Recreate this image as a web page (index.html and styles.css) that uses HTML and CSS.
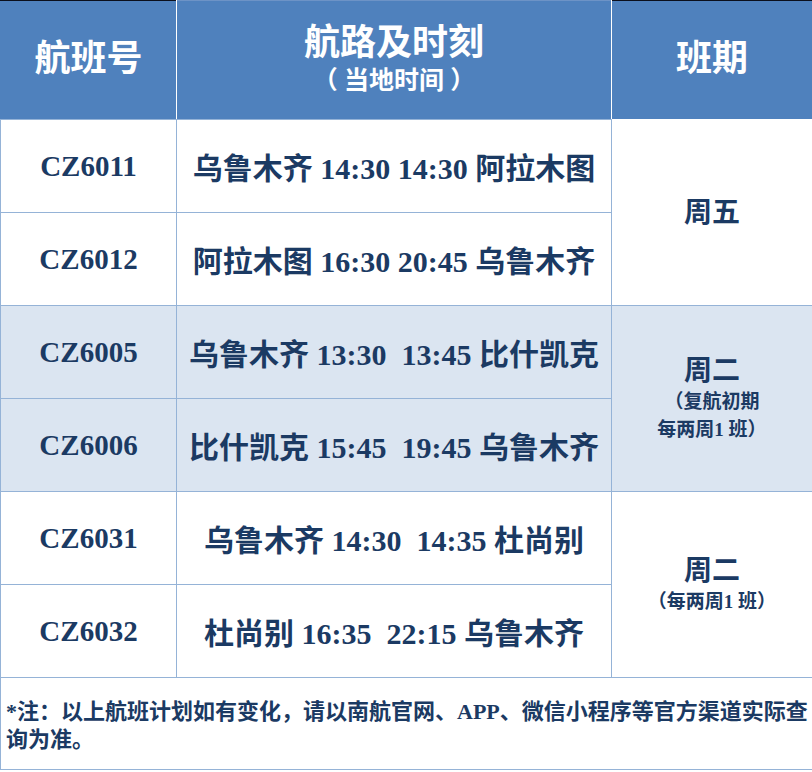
FILE: index.html
```html
<!DOCTYPE html>
<html lang="zh-CN">
<head>
<meta charset="utf-8">
<title>航班计划</title>
<link rel="stylesheet" href="styles.css">
</head>
<body>
<table class="schedule">
  <colgroup>
    <col class="c1">
    <col class="c2">
    <col class="c3">
  </colgroup>
  <thead>
    <tr class="head">
      <th class="h1">航班号</th>
      <th class="h2"><div class="h-main">航路及时刻</div><div class="h-sub">（ 当地时间 ）</div></th>
      <th class="h3">班期</th>
    </tr>
  </thead>
  <tbody>
    <tr>
      <td class="code">CZ6011</td>
      <td class="route">乌鲁木齐 14:30 14:30 阿拉木图</td>
      <td class="days" rowspan="2"><div class="day-main">周五</div></td>
    </tr>
    <tr>
      <td class="code">CZ6012</td>
      <td class="route">阿拉木图 16:30 20:45 乌鲁木齐</td>
    </tr>
    <tr class="shade">
      <td class="code">CZ6005</td>
      <td class="route">乌鲁木齐 13:30&nbsp; 13:45 比什凯克</td>
      <td class="days" rowspan="2"><div class="day-main">周二</div><div class="day-sub">（复航初期</div><div class="day-sub">每两周1 班）</div></td>
    </tr>
    <tr class="shade">
      <td class="code">CZ6006</td>
      <td class="route">比什凯克 15:45&nbsp; 19:45 乌鲁木齐</td>
    </tr>
    <tr>
      <td class="code">CZ6031</td>
      <td class="route">乌鲁木齐 14:30&nbsp; 14:35 杜尚别</td>
      <td class="days" rowspan="2"><div class="day-main">周二</div><div class="day-sub">（每两周1 班）</div></td>
    </tr>
    <tr>
      <td class="code">CZ6032</td>
      <td class="route">杜尚别 16:35&nbsp; 22:15 乌鲁木齐</td>
    </tr>
    <tr>
      <td class="note" colspan="3">*注：以上航班计划如有变化，请以南航官网、APP、微信小程序等官方渠道实际查询为准。</td>
    </tr>
  </tbody>
</table>
</body>
</html>
```
FILE: styles.css
```css
html, body {
  margin: 0;
  padding: 0;
  background: #ffffff;
}
body {
  font-family: "Liberation Serif", "Noto Sans CJK SC", serif;
  color: #1b3a63;
}
.schedule {
  border-collapse: collapse;
  table-layout: fixed;
  width: 812px;
}
.c1 { width: 176px; }
.c2 { width: 435px; }
.c3 { width: 201px; }

.head th {
  height: 118px;
  padding: 0;
  background: #4f81bd;
  color: #ffffff;
  font-weight: bold;
  text-align: center;
  vertical-align: middle;
  line-height: 1.2;
  border-top: 1px solid #0b0f1c;
  border-bottom: 1px solid #95b3d7;
  border-left: 1px solid #ffffff;
  border-right: 1px solid #ffffff;
}
.head .h1 {
  font-size: 36px;
  border-left: 1px solid #4f81bd;
}
.head .h2 {
  border-top: 1px solid #6d93c6;
}
.head .h3 {
  font-size: 36px;
  border-right: 1px solid #95b3d7;
  border-bottom: 1px solid #ffffff;
}
.h-main {
  font-size: 36px;
  line-height: 42px;
}
.h-sub {
  font-size: 25px;
  line-height: 34px;
  white-space: pre;
}
td {
  padding: 0;
  border: 1px solid #95b3d7;
  text-align: center;
  vertical-align: middle;
  font-weight: bold;
}
.code {
  height: 92px;
  font-size: 29px;
}
.route {
  font-size: 30px;
  white-space: nowrap;
}
.shade td {
  background: #dbe5f1;
}
.day-main {
  font-size: 28px;
  line-height: 34px;
}
.day-sub {
  font-size: 19px;
  line-height: 28px;
}
.note {
  height: 92px;
  text-align: left;
  vertical-align: top;
  font-size: 22px;
  line-height: 28px;
  padding: 20px 4px 0 5px;
  box-sizing: border-box;
}
```
